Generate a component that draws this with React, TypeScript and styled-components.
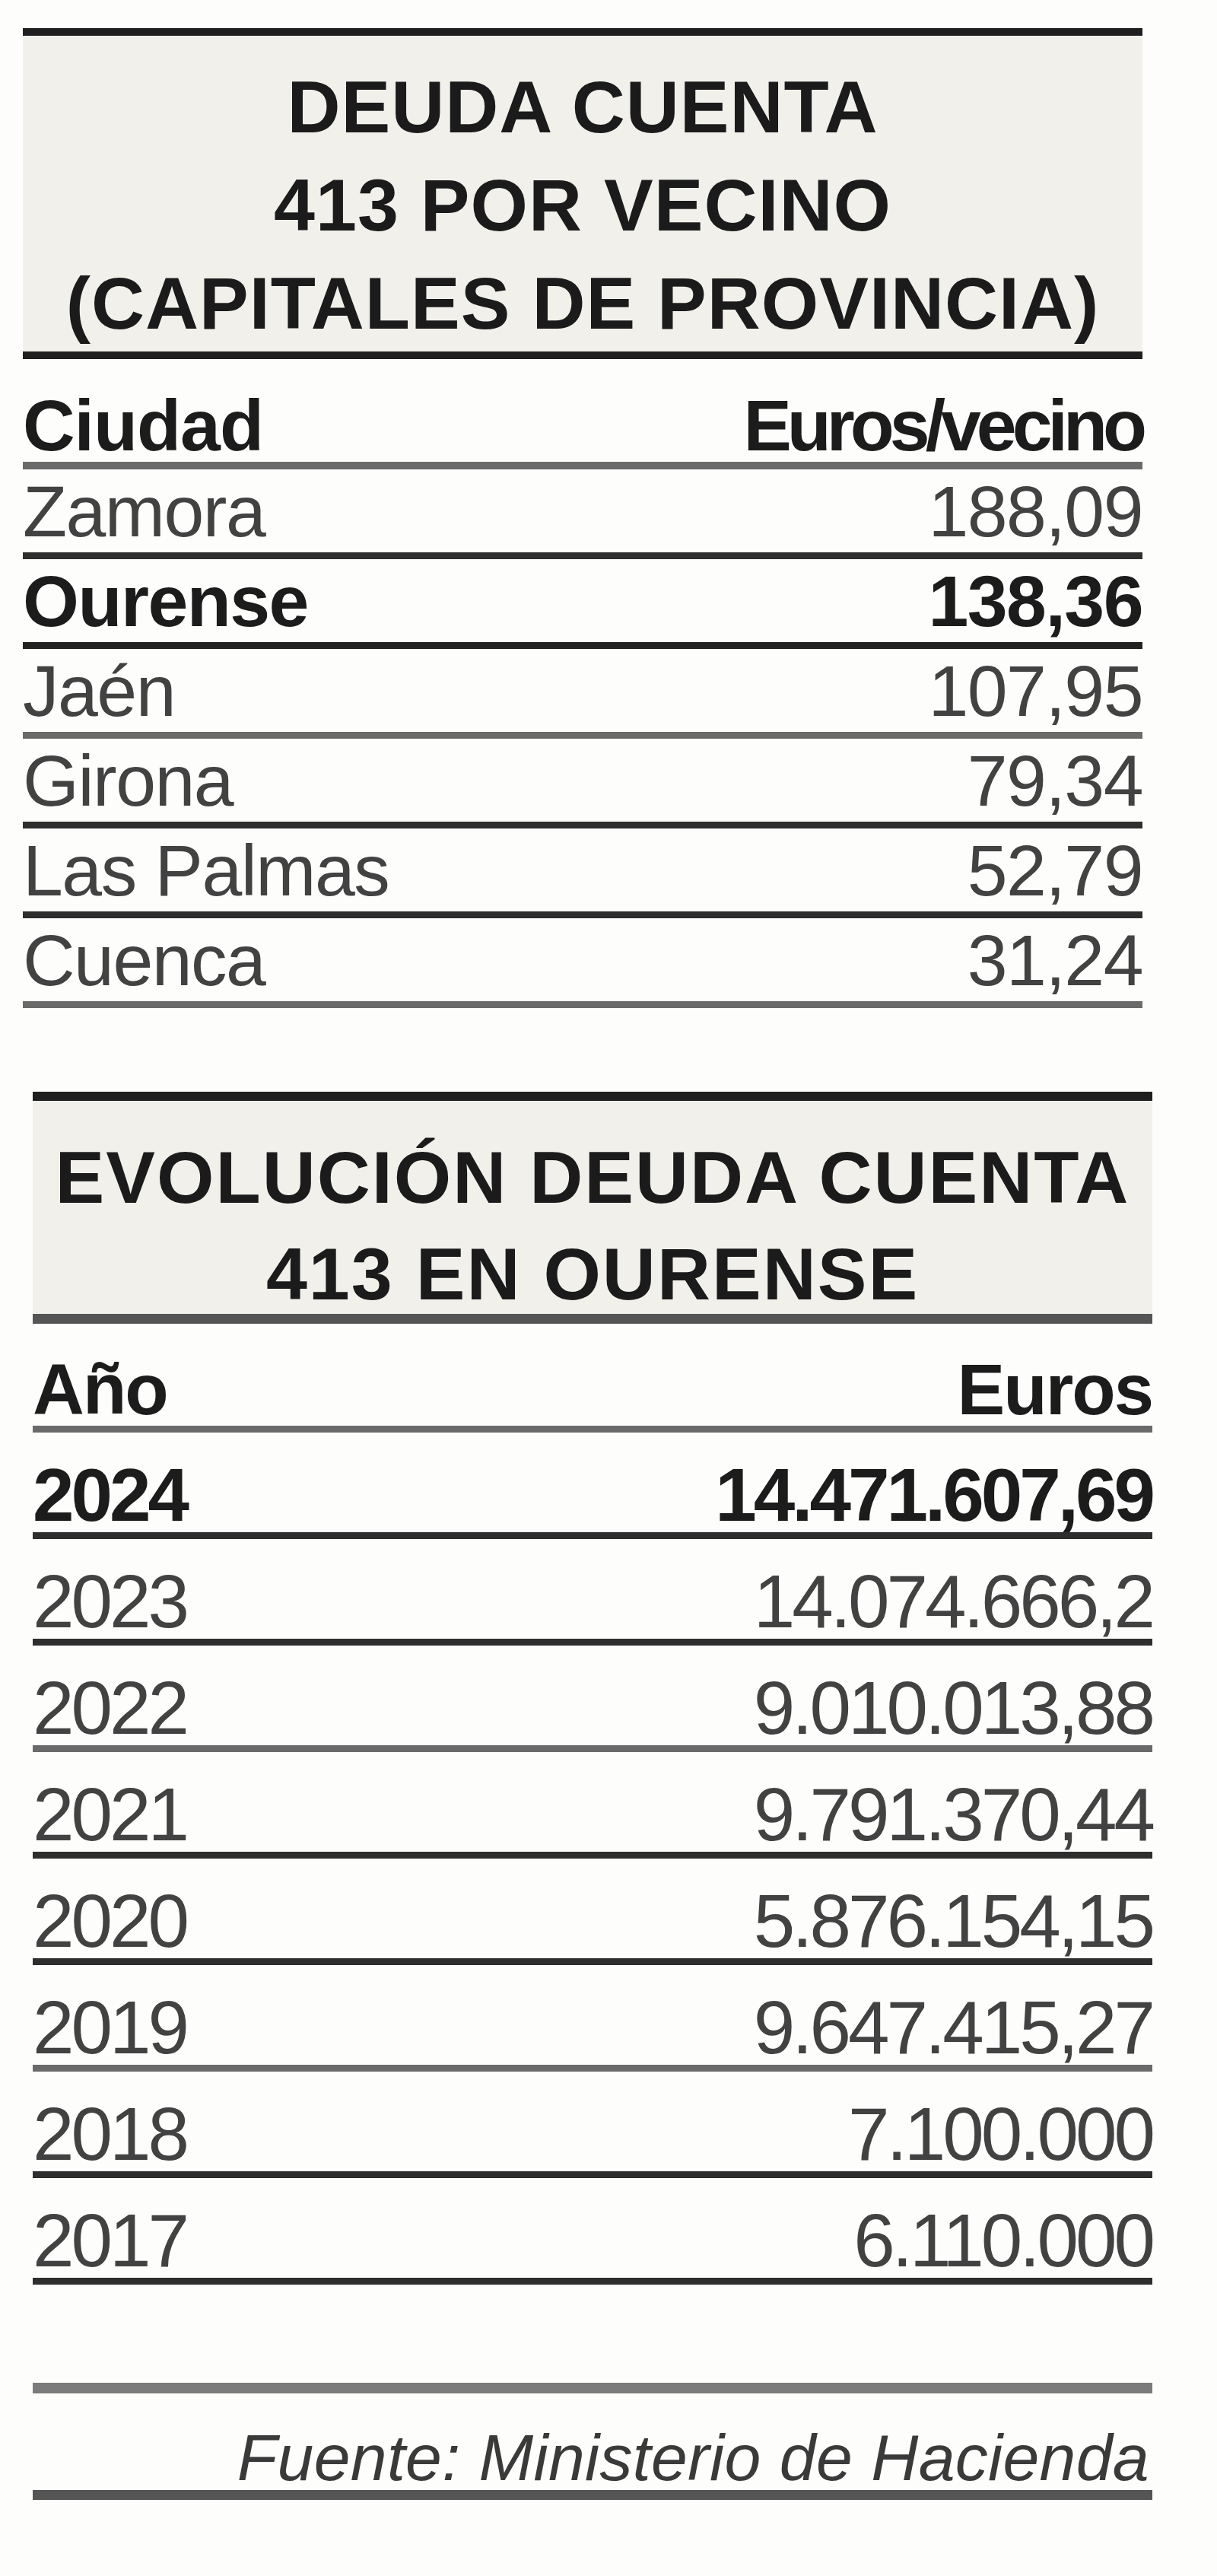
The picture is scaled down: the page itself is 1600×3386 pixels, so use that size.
import React from "react";
import styled, { createGlobalStyle } from "styled-components";

const Global = createGlobalStyle`
  * { box-sizing: border-box; }
  html, body { margin: 0; padding: 0; background: #fdfdfc; }
  body { font-family: "Liberation Sans", Arial, Helvetica, sans-serif; }
`;

const Page = styled.div`
  width: 1600px;
  min-height: 3386px;
  padding-top: 37px;
  background: #fdfdfc;
`;

const Section = styled.section<{ $left: number; $gap?: number }>`
  margin-left: ${(p) => p.$left}px;
  margin-top: ${(p) => p.$gap ?? 0}px;
  width: 1472px;
`;

const TitleBox = styled.header<{ $height: number; $top: number; $bottom: number; $pad: number; $bottomColor: string }>`
  height: ${(p) => p.$height}px;
  padding-top: ${(p) => p.$pad}px;
  background: #f1f0eb;
  border-top: ${(p) => p.$top}px solid #1f1f1f;
  border-bottom: ${(p) => p.$bottom}px solid ${(p) => p.$bottomColor};
  text-align: center;
`;

const Title = styled.h2<{ $size: number; $lh: number; $ls: number }>`
  margin: 0;
  font-size: ${(p) => p.$size}px;
  line-height: ${(p) => p.$lh}px;
  font-weight: 700;
  letter-spacing: ${(p) => p.$ls}px;
  color: #1b1b1b;
  white-space: nowrap;
`;

const Row = styled.div<{
  $size: number;
  $lh: number;
  $padTop: number;
  $padBottom?: number;
  $bold?: boolean;
  $rule: string;
  $ruleW: number;
  $ls: number;
}>`
  display: flex;
  justify-content: space-between;
  align-items: baseline;
  padding-top: ${(p) => p.$padTop}px;
  padding-bottom: ${(p) => p.$padBottom ?? 0}px;
  font-size: ${(p) => p.$size}px;
  line-height: ${(p) => p.$lh}px;
  font-weight: ${(p) => (p.$bold ? 700 : 400)};
  letter-spacing: ${(p) => p.$ls}px;
  color: ${(p) => (p.$bold ? "#1c1c1c" : "#424242")};
  border-bottom: ${(p) => p.$ruleW}px solid ${(p) => p.$rule};
  white-space: nowrap;
`;

const Cell = styled.span<{ $tight?: boolean }>`
  ${(p) => (p.$tight ? "letter-spacing: -6px;" : "")}
`;

const Footer = styled.footer`
  margin-left: 43px;
  margin-top: 129px;
  width: 1472px;
  border-top: 14px solid #7b7b7b;
  border-bottom: 13px solid #555;
  padding-top: 41px;
  text-align: right;
`;

const Source = styled.p`
  margin: 0;
  padding-right: 4px;
  font-size: 86px;
  line-height: 86px;
  font-style: italic;
  color: #3a3a3a;
  letter-spacing: 0.3px;
  white-space: nowrap;
`;

const DARK = "#2e2e2e";
const GRAY = "#6a6a6a";

const cities: { name: string; value: string; bold?: boolean; rule: string }[] = [
  { name: "Zamora", value: "188,09", rule: DARK },
  { name: "Ourense", value: "138,36", bold: true, rule: "#222" },
  { name: "Jaén", value: "107,95", rule: GRAY },
  { name: "Girona", value: "79,34", rule: DARK },
  { name: "Las Palmas", value: "52,79", rule: DARK },
  { name: "Cuenca", value: "31,24", rule: GRAY },
];

const years: { year: string; value: string; bold?: boolean; rule: string }[] = [
  { year: "2024", value: "14.471.607,69", bold: true, rule: DARK },
  { year: "2023", value: "14.074.666,2", rule: DARK },
  { year: "2022", value: "9.010.013,88", rule: GRAY },
  { year: "2021", value: "9.791.370,44", rule: DARK },
  { year: "2020", value: "5.876.154,15", rule: DARK },
  { year: "2019", value: "9.647.415,27", rule: GRAY },
  { year: "2018", value: "7.100.000", rule: DARK },
  { year: "2017", value: "6.110.000", rule: DARK },
];

export default function App() {
  return (
    <Page>
      <Global />
      <Section $left={30}>
        <TitleBox $height={435} $top={10} $bottom={10} $pad={29} $bottomColor="#1f1f1f">
          <Title $size={97} $lh={129} $ls={1}>
            DEUDA CUENTA
            <br />
            413 POR VECINO
            <br />
            (CAPITALES DE PROVINCIA)
          </Title>
        </TitleBox>
        <Row $size={95} $lh={95} $padTop={40} $bold $rule={GRAY} $ruleW={10} $ls={-1}>
          <Cell>Ciudad</Cell>
          <Cell $tight>Euros/vecino</Cell>
        </Row>
        {cities.map((c) => (
          <Row
            key={c.name}
            $size={95}
            $lh={95}
            $padTop={8}
            $padBottom={6}
            $bold={c.bold}
            $rule={c.rule}
            $ruleW={9}
            $ls={-1.5}
          >
            <Cell>{c.name}</Cell>
            <Cell>{c.value}</Cell>
          </Row>
        ))}
      </Section>

      <Section $left={43} $gap={110}>
        <TitleBox $height={305} $top={12} $bottom={13} $pad={37} $bottomColor="#555">
          <Title $size={97} $lh={127} $ls={2}>
            EVOLUCIÓN DEUDA CUENTA
            <br />
            413 EN OURENSE
          </Title>
        </TitleBox>
        <Row $size={94} $lh={94} $padTop={40} $bold $rule={GRAY} $ruleW={9} $ls={-2}>
          <Cell>Año</Cell>
          <Cell>Euros</Cell>
        </Row>
        {years.map((y) => (
          <Row
            key={y.year}
            $size={98}
            $lh={98}
            $padTop={33}
            $bold={y.bold}
            $rule={y.rule}
            $ruleW={9}
            $ls={-4}
          >
            <Cell>{y.year}</Cell>
            <Cell>{y.value}</Cell>
          </Row>
        ))}
      </Section>

      <Footer>
        <Source>Fuente: Ministerio de Hacienda</Source>
      </Footer>
    </Page>
  );
}
